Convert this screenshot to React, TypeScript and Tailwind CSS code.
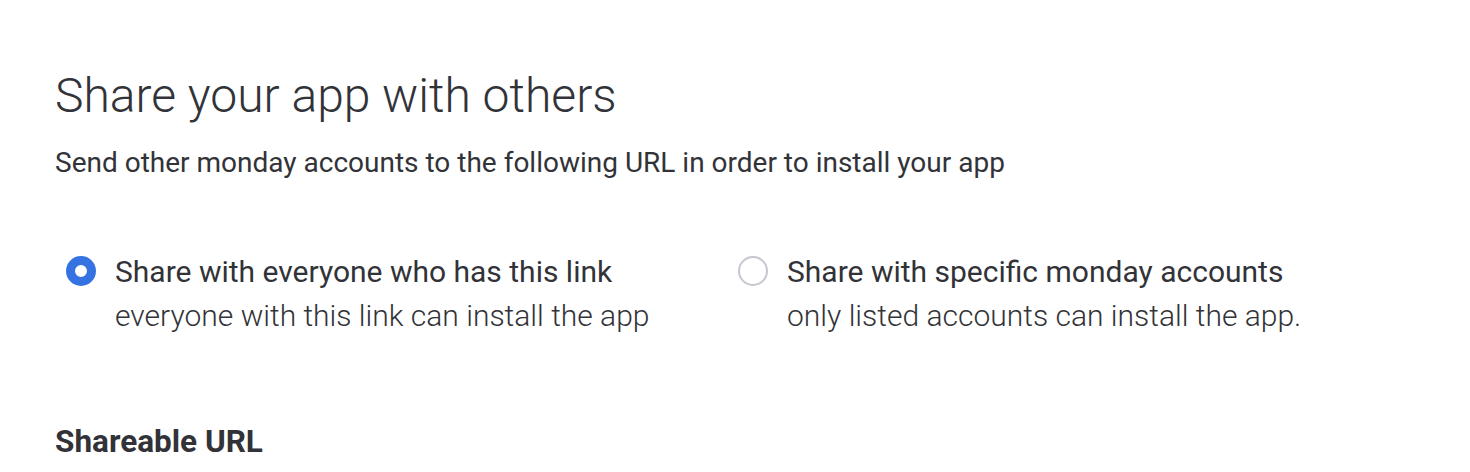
export default function App() {
  return (
    <div className="min-h-screen bg-white font-['Roboto',sans-serif] text-[#323338] pl-[55px] pt-[66px]">
      <h1 className="text-[48px] font-light leading-[60px]">Share your app with others</h1>
      <p className="mt-[18px] text-[28px] leading-[38px]">
        Send other monday accounts to the following URL in order to install your app
      </p>
      <div className="mt-[68px] flex pl-[11px]">
        <Option
          checked
          title="Share with everyone who has this link"
          desc="everyone with this link can install the app"
          className="w-[672px]"
        />
        <Option
          title="Share with specific monday accounts"
          desc="only listed accounts can install the app."
        />
      </div>
      <h2 className="mt-[85px] text-[31.5px] font-bold leading-[38px]">Shareable URL</h2>
    </div>
  );
}

function Option({
  checked,
  title,
  desc,
  className,
}: {
  checked?: boolean;
  title: string;
  desc: string;
  className?: string;
}) {
  return (
    <label className={`flex items-start gap-[19px] ${className ?? ""}`}>
      {checked ? (
        <span className="mt-[6px] h-[30px] w-[30px] shrink-0 rounded-full border-[9px] border-[#3573e3] bg-white" />
      ) : (
        <span className="mt-[6px] h-[30px] w-[30px] shrink-0 rounded-full border-[2px] border-[#c5c7d0] bg-white" />
      )}
      <span className="flex flex-col">
        <span className="text-[30px] leading-[44px]">{title}</span>
        <span className="text-[30px] font-light leading-[44px]">{desc}</span>
      </span>
    </label>
  );
}
